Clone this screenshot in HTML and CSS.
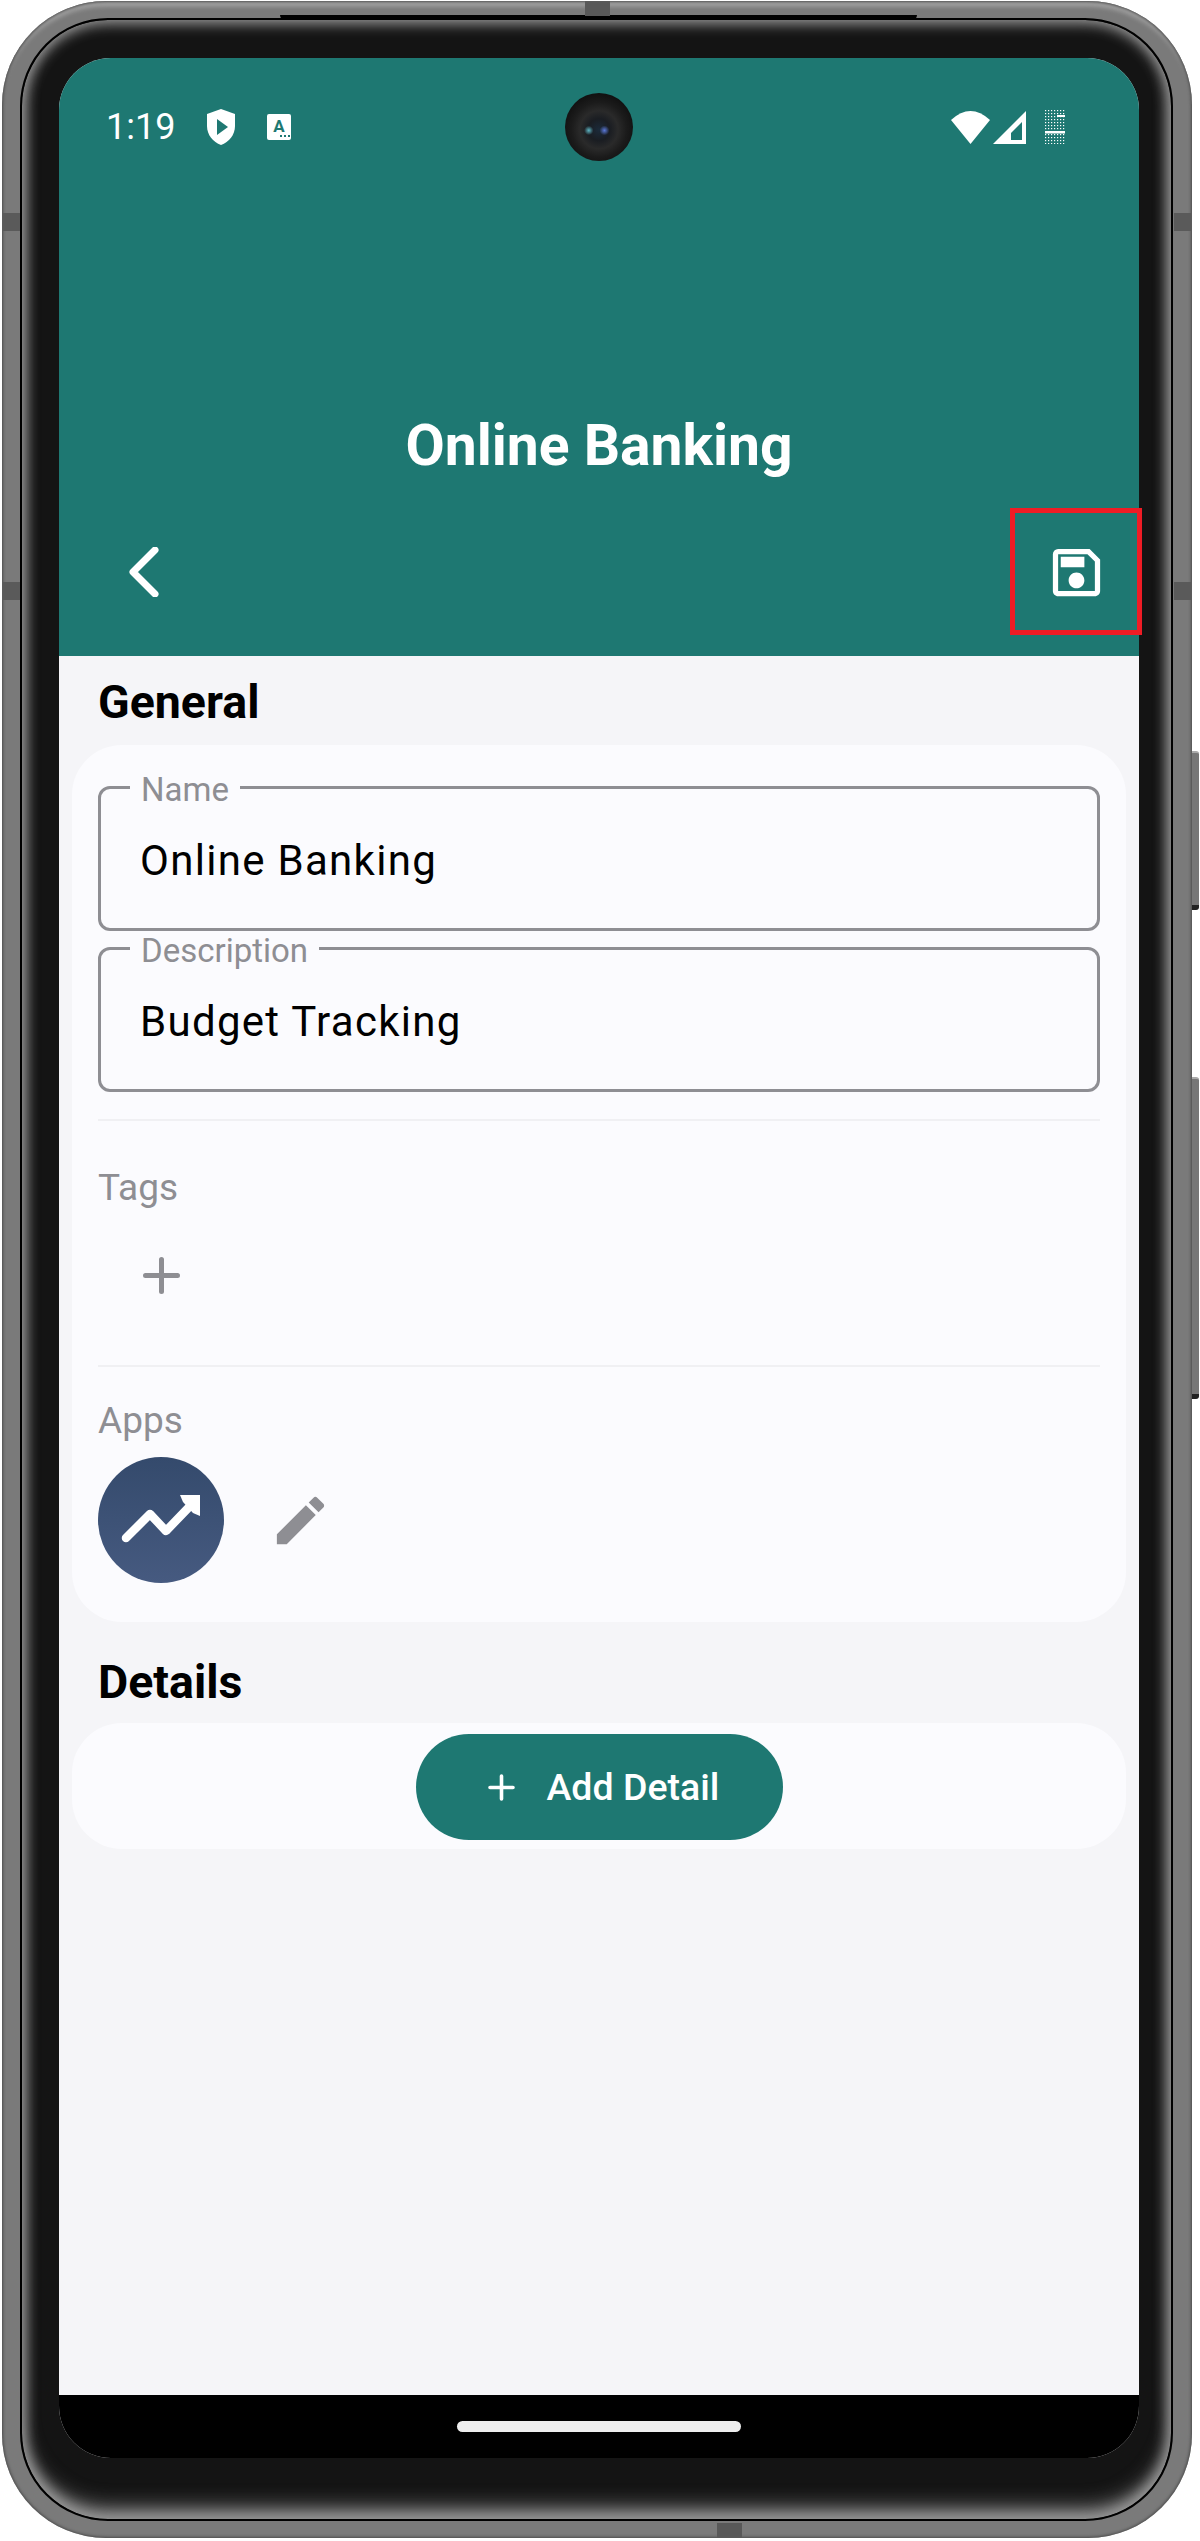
FILE: index.html
```html
<!DOCTYPE html>
<html lang="en">
<head>
    <meta charset="UTF-8">
    <meta name="viewport" content="width=device-width, initial-scale=1.0">
    <title>Online Banking</title>
    <link rel="stylesheet" href="styles.css">
</head>
<body>
    <div class="phone">
        <span class="top-slot"></span>
        <span class="nub nub-top"></span>
        <span class="nub nub-bottom"></span>
        <span class="band band-left band-a"></span>
        <span class="band band-left band-b"></span>
        <span class="band band-right band-a"></span>
        <span class="band band-right band-b"></span>
        <span class="side-btn power-btn"></span>
        <span class="side-btn volume-btn"></span>

        <div class="bezel">
            <div class="screen">
                <span class="camera"></span>

                <header class="app-header">
                    <div class="status-bar">
                        <div class="status-left">
                            <span class="status-time">1:19</span>
                            <svg class="icon-shield" viewBox="0 0 28 36">
                                <path fill="#fff" d="M14 0 L28 5 V17 C28 26 22 33 14 36 C6 33 0 26 0 17 V5 Z"/>
                                <path fill="#1e7872" d="M10 10 L21 18 L10 26 Z"/>
                            </svg>
                            <svg class="icon-keyboard" viewBox="0 0 24 26">
                                <rect width="24" height="26" rx="2" fill="#fff"/>
                                <text x="12" y="18" text-anchor="middle" class="icon-letter">A</text>
                                <rect x="13" y="21" width="2" height="2" fill="#1e7872"/>
                                <rect x="17" y="21" width="2" height="2" fill="#1e7872"/>
                                <rect x="21" y="21" width="2" height="2" fill="#1e7872"/>
                            </svg>
                        </div>
                        <div class="status-right">
                            <svg class="icon-wifi" viewBox="0 0 39 33">
                                <path fill="#fff" d="M0 9 Q19.5 -9 39 9 L19.5 33 Z"/>
                            </svg>
                            <svg class="icon-signal" viewBox="0 0 33 33">
                                <path fill="#fff" d="M0 33 L33 0 V33 Z"/>
                                <path fill="#1e7872" d="M18 29 H29 V11 L18 22 Z"/>
                            </svg>
                            <svg class="icon-noise" viewBox="0 0 20 34">
                                <defs>
                                    <pattern id="dots" width="3" height="3" patternUnits="userSpaceOnUse">
                                        <rect width="1.2" height="1.2" fill="#fff"/>
                                    </pattern>
                                </defs>
                                <rect width="20" height="34" fill="url(#dots)"/>
                                <rect x="12" y="5" width="8" height="2" fill="#fff"/>
                                <rect y="21" width="20" height="2.5" fill="#fff"/>
                            </svg>
                        </div>
                    </div>

                    <h1 class="app-title">Online Banking</h1>

                    <div class="toolbar">
                        <svg class="icon-back" viewBox="0 0 30 50">
                            <path d="M26 3 L4 25 L26 47" fill="none" stroke="#fff" stroke-width="7" stroke-linecap="round" stroke-linejoin="round"/>
                        </svg>
                        <svg class="icon-save" viewBox="0 0 24 24">
                            <path fill="#fff" d="M17 3H5a2 2 0 0 0-2 2v14c0 1.1.89 2 2 2h14c1.1 0 2-.9 2-2V7l-4-4zm2 16H5V5h11.17L19 7.83V19zm-7-7c-1.66 0-3 1.34-3 3s1.34 3 3 3 3-1.34 3-3-1.34-3-3-3zM6 6h9v4H6z"/>
                        </svg>
                    </div>
                </header>

                <main class="app-content">
                    <h2 class="section-title">General</h2>
                    <section class="card general-card">
                        <div class="field">
                            <span class="field-label">Name</span>
                            <span class="field-value">Online Banking</span>
                        </div>
                        <div class="field">
                            <span class="field-label">Description</span>
                            <span class="field-value">Budget Tracking</span>
                        </div>

                        <hr class="divider first-divider">
                        <div class="group-label tags-label">Tags</div>
                        <div class="tags-row">
                            <svg class="icon-plus" viewBox="0 0 37 37">
                                <path d="M18.5 2.5 V34.5 M2.5 18.5 H34.5" stroke="#8e8e93" stroke-width="5" stroke-linecap="round"/>
                            </svg>
                        </div>

                        <hr class="divider">
                        <div class="group-label apps-label">Apps</div>
                        <div class="apps-row">
                            <div class="app-icon">
                                <svg viewBox="0 0 126 126">
                                    <path d="M28 81 L52 57 L68 74 L94 47" fill="none" stroke="#fff" stroke-width="8.5" stroke-linecap="round" stroke-linejoin="round"/>
                                    <path fill="#fff" d="M82 38 H102 V59 L95 56 L85 45 Z"/>
                                </svg>
                            </div>
                            <svg class="icon-edit" viewBox="0 0 24 24">
                                <path fill="#8e8e93" d="M3 17.25V21h3.75L17.81 9.94l-3.75-3.75L3 17.25zM20.71 7.04c.39-.39.39-1.02 0-1.41l-2.34-2.34c-.39-.39-1.02-.39-1.41 0l-1.83 1.83 3.75 3.75 1.83-1.83z"/>
                            </svg>
                        </div>
                    </section>

                    <h2 class="section-title details-title">Details</h2>
                    <section class="card details-card">
                        <button class="add-btn">
                            <svg class="icon-add" viewBox="0 0 27 27">
                                <path d="M13.5 2 V25 M2 13.5 H25" stroke="#fff" stroke-width="3.6" stroke-linecap="round"/>
                            </svg>
                            Add Detail
                        </button>
                    </section>
                </main>

                <div class="nav-bar"><span class="home-pill"></span></div>
            </div>
            <span class="highlight-box"></span>
        </div>
    </div>
</body>
</html>
```

FILE: styles.css
```css
/* Reset and Base Styles */
* {
    margin: 0;
    padding: 0;
    box-sizing: border-box;
    font-family: "Roboto", "Liberation Sans", sans-serif;
}

body {
    background-color: white;
    width: 1200px;
    height: 2541px;
    overflow: hidden;
}

/* Phone frame */
.phone {
    position: relative;
    width: 1190px;
    height: 2537px;
    margin: 1px 0 0 2px;
    padding: 17px 19px 17px 18px;
    border-radius: 104px;
    background: #7a7a7a;
    box-shadow: inset 0 0 3px 1px #4a4a4a, inset 0 8px 5px -3px #a8a8a8;
}

.bezel {
    position: relative;
    width: 100%;
    height: 100%;
    padding: 38px 32px 61px 37px;
    border: 2px solid #000;
    border-radius: 88px;
    background: #141414;
    box-shadow: inset 0 0 13px 4px #9a9a9a, inset 0 -16px 20px -4px #777;
}

.top-slot {
    position: absolute;
    top: 14px;
    left: 278px;
    width: 637px;
    height: 6px;
    background: #000;
    border-radius: 0 0 6px 6px;
}

.nub {
    position: absolute;
    width: 25px;
    height: 15px;
    background: #585858;
}

.nub-top {
    top: 0;
    left: 583px;
}

.nub-bottom {
    bottom: 0;
    left: 715px;
}

.band {
    position: absolute;
    width: 17px;
    height: 18px;
    background: #5a5a5a;
}

.band-left {
    left: 1px;
}

.band-right {
    right: 1px;
}

.band-a {
    top: 212px;
}

.band-b {
    top: 581px;
}

.side-btn {
    position: absolute;
    right: -7px;
    width: 7px;
    background: #777;
    border-top: 2px solid #aaa;
    border-bottom: 5px solid #222;
    border-radius: 0 3px 3px 0;
}

.power-btn {
    top: 750px;
    height: 159px;
}

.volume-btn {
    top: 1076px;
    height: 322px;
}

.screen {
    position: relative;
    width: 1080px;
    height: 2400px;
    display: flex;
    flex-direction: column;
    overflow: hidden;
    border-radius: 52px;
    background: #f5f5f8;
}

.camera {
    position: absolute;
    top: 35px;
    left: 506px;
    width: 68px;
    height: 68px;
    border-radius: 50%;
    background:
        radial-gradient(circle at 35% 55%, #5fb6c4 0, transparent 8%),
        radial-gradient(circle at 58% 55%, #5b78d8 0, transparent 9%),
        radial-gradient(circle at 50% 54%, #1b2a3a 0, #1a1d22 22%, #2a2a2a 38%, #1b1b1b 55%, #0a0a0a 85%, #000 100%);
}

/* Header */
.app-header {
    height: 598px;
    background-color: #1e7872;
    color: white;
    display: flex;
    flex-direction: column;
}

.status-bar {
    height: 48px;
    margin-top: 45px;
    padding: 0 74px 0 47px;
    display: flex;
    justify-content: space-between;
    align-items: center;
}

.status-left,
.status-right {
    display: flex;
    align-items: center;
}

.status-time {
    font-size: 36px;
    width: 101px;
}

.icon-shield {
    width: 28px;
    height: 36px;
}

.icon-keyboard {
    width: 24px;
    height: 26px;
    margin-left: 32px;
}

.icon-letter {
    font-size: 17px;
    font-weight: 700;
    fill: #1e7872;
}

.icon-wifi {
    width: 39px;
    height: 33px;
}

.icon-signal {
    width: 33px;
    height: 33px;
    margin-left: 3px;
}

.icon-noise {
    width: 20px;
    height: 34px;
    margin-left: 19px;
}

.app-title {
    margin-top: 263px;
    height: 64px;
    line-height: 64px;
    text-align: center;
    font-size: 57px;
    font-weight: 700;
}

.toolbar {
    height: 80px;
    margin-top: 54px;
    padding: 0 31px 0 70px;
    display: flex;
    justify-content: space-between;
    align-items: center;
}

.icon-back {
    width: 30px;
    height: 50px;
}

.icon-save {
    width: 63px;
    height: 63px;
}

/* Content */
.app-content {
    flex: 1;
    padding: 0 13px;
}

.section-title {
    height: 56px;
    margin-top: 18px;
    margin-bottom: 15px;
    padding-left: 26px;
    line-height: 56px;
    font-size: 46.5px;
    font-weight: 700;
    color: black;
}

.details-title {
    margin-top: 32px;
    margin-bottom: 13px;
}

.card {
    background-color: #fbfbfe;
    border-radius: 50px;
}

.general-card {
    padding: 41px 26px 39px;
}

.field {
    position: relative;
    height: 145px;
    margin-bottom: 16px;
    padding: 48px 39px 0;
    border: 3px solid #8e8e93;
    border-radius: 12px;
}

.field-label {
    position: absolute;
    top: -17px;
    left: 29px;
    padding: 0 11px;
    height: 36px;
    line-height: 36px;
    background-color: #fbfbfe;
    font-size: 33px;
    color: #8e8e93;
}

.field-value {
    display: block;
    line-height: 48px;
    font-size: 42px;
    letter-spacing: 1.3px;
    color: black;
}

.divider {
    height: 2px;
    border: none;
    background-color: #f0f0f3;
}

.first-divider {
    margin-top: 27px;
}

.group-label {
    line-height: 42px;
    font-size: 37px;
    color: #8e8e93;
}

.tags-label {
    margin-top: 46px;
}

.tags-row {
    height: 156px;
    padding-left: 45px;
    padding-top: 48px;
}

.icon-plus {
    width: 37px;
    height: 37px;
    display: block;
}

.apps-label {
    margin-top: 33px;
}

.apps-row {
    margin-top: 15px;
    display: flex;
    align-items: center;
    gap: 45px;
}

.app-icon {
    width: 126px;
    height: 126px;
    border-radius: 50%;
    background: linear-gradient(#344a6c, #465a80);
}

.app-icon svg {
    display: block;
}

.icon-edit {
    width: 63px;
    height: 63px;
}

.details-card {
    padding: 11px 0 9px;
    display: flex;
    justify-content: center;
}

.add-btn {
    width: 367px;
    height: 106px;
    padding-left: 72px;
    display: flex;
    align-items: center;
    gap: 32px;
    border: none;
    border-radius: 53px;
    background-color: #1e7872;
    color: white;
    font-size: 37.5px;
    font-weight: 500;
}

.icon-add {
    width: 27px;
    height: 27px;
}

.nav-bar {
    height: 63px;
    padding-top: 26px;
    background-color: black;
    display: flex;
    justify-content: center;
    align-items: flex-start;
}

.home-pill {
    width: 284px;
    height: 11px;
    border-radius: 6px;
    background-color: #eeeeee;
}

.highlight-box {
    position: absolute;
    top: 488px;
    left: 988px;
    width: 132px;
    height: 127px;
    border: 5px solid #ee1c25;
}
```
